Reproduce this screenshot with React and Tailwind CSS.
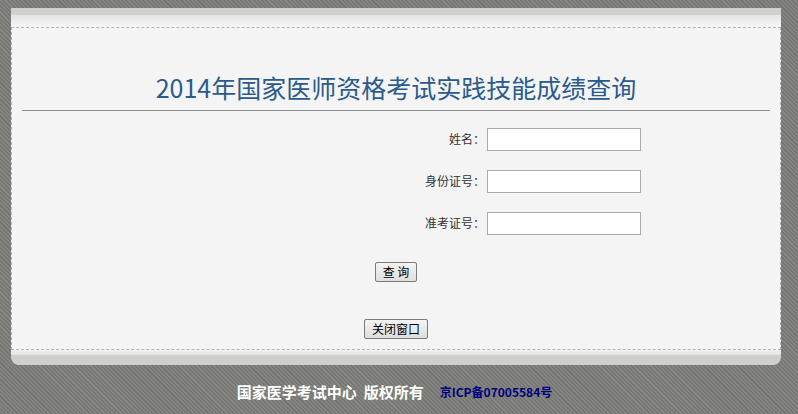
export default function App() {
  const cjk = "font-['Noto_Sans_CJK_SC',sans-serif]";
  const Row = ({ label }) => (
    <div className="flex items-center h-[22px]">
      <div className={`w-[473px] text-right text-[12px] text-[#333] ${cjk}`}>{label}</div>
      <input className="ml-[2px] w-[154px] h-[23px] bg-white border border-[#aaa] outline-none" />
    </div>
  );
  return (
    <div className="min-h-[414px] w-full bg-[repeating-linear-gradient(45deg,#767773_0px,#767773_1.5px,#858681_1.5px,#858681_3px)] pt-[8px]">
      <div className="ml-[11px] w-[770px]">
        <div className="h-[7px] bg-[#d0d0ce]" />
        <div className="h-[12px] bg-[linear-gradient(#e4e4e4,#f6f6f6)]" />
        <div className="border border-dashed border-[#b4b4b4] bg-[#f4f4f4] pt-[43px] pb-[10px]">
          <h1 className={`text-center text-[25px] leading-[32px] text-[#2a5b8c] ${cjk}`}>
            2014年国家医师资格考试实践技能成绩查询
          </h1>
          <div className="mx-[10px] mt-[7px] h-px bg-[#8c8c8c]" />
          <div className="mt-[17px] flex flex-col gap-[20px]">
            <Row label="姓名：" />
            <Row label="身份证号：" />
            <Row label="准考证号：" />
          </div>
          <div className="mt-[28px] flex justify-center">
            <button className={`w-[42px] h-[20px] text-[12px] leading-none text-black border border-[#7a7a7a] rounded-[2px] bg-[linear-gradient(#f4f4f4,#dedede)] ${cjk}`}>查 询</button>
          </div>
          <div className="mt-[37px] flex justify-center">
            <button className={`w-[64px] h-[20px] text-[12px] leading-none text-black border border-[#7a7a7a] rounded-[2px] bg-[linear-gradient(#f4f4f4,#dedede)] ${cjk}`}>关闭窗口</button>
          </div>
        </div>
        <div className="h-[5px] bg-[linear-gradient(#f2f2f2,#e2e2e2)]" />
        <div className="h-[10px] bg-[#cfcfcd] rounded-b-[8px]" />
      </div>
      <div className="mt-[16px] flex justify-center items-center gap-[16px] pr-[9px]">
        <span className={`text-[15px] font-bold text-white ${cjk}`}>国家医学考试中心<span className="inline-block w-[7px]" />版权所有</span>
        <span className={`text-[12px] font-bold text-[#000080] ${cjk}`}>京ICP备07005584号</span>
      </div>
    </div>
  );
}
